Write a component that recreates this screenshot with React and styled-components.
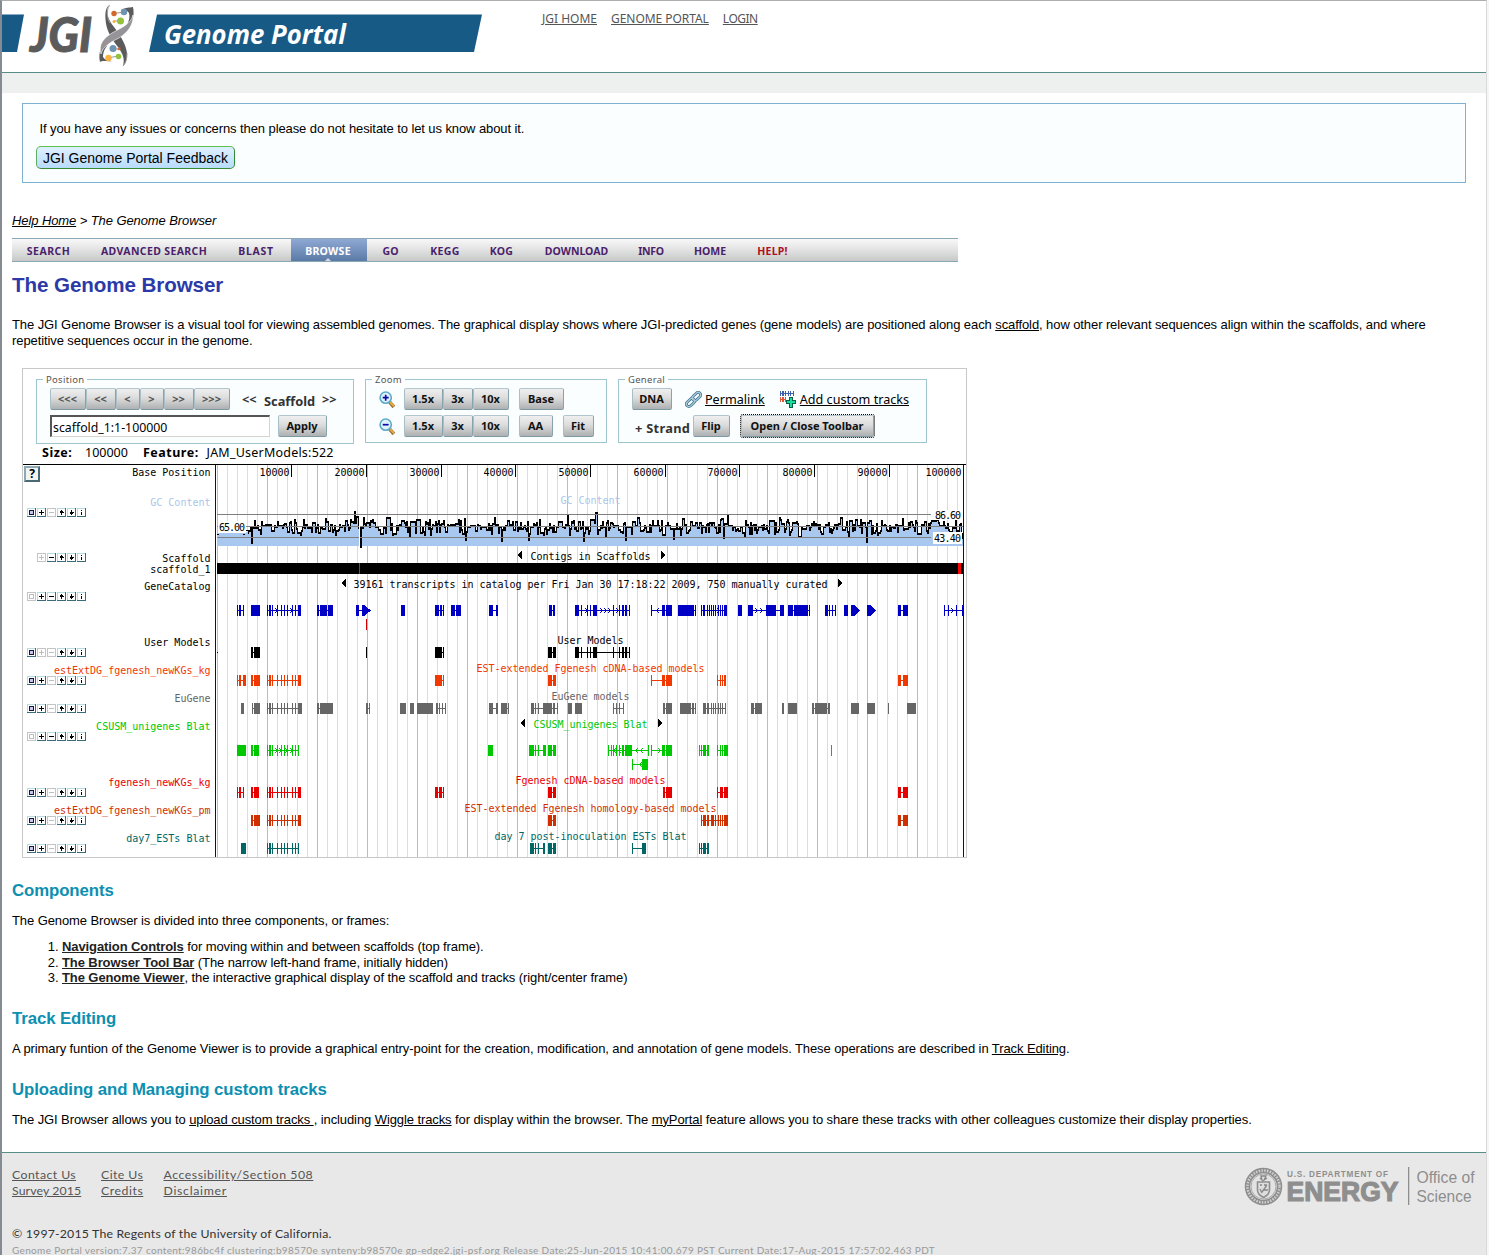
import React from "react";
import styled, { createGlobalStyle } from "styled-components";

const Global = createGlobalStyle`
  * { box-sizing: border-box; }
  html, body { margin: 0; background: #f6f6f6; }
  body { overflow: hidden; }
  a { color: inherit; text-decoration: underline; }
`;

const sans = `"Liberation Sans", Arial, sans-serif`;
const ui = `"Noto Sans", "DejaVu Sans", sans-serif`;
const mono = `"DejaVu Sans Mono", "Liberation Mono", monospace`;

const Page = styled.div`
  width: 1487px;
  height: 1255px;
  overflow: hidden;
  background: #fff;
  border-left: 2px solid #858b90;
  border-right: 1px solid #d9d9d9;
  border-top: 1px solid #adadad;
  font: 13px/16px ${sans};
  color: #000;
`;

const Header = styled.header`
  display: flex;
  height: 72px;
  border-bottom: 1px solid #568d86;
`;

const TopLinks = styled.nav`
  display: flex;
  gap: 14px;
  padding: 9px 0 0 58px;
  font: 12px/18px ${ui};
  color: #555;
`;

const TopLink = styled.a`
  letter-spacing: ${(p) => p.$ls || 0}px;
`;

const Band = styled.div`
  height: 20px;
  background: #eef0f0;
`;

const Content = styled.main`
  padding: 10px 10px 0;
  height: 1059px;
  letter-spacing: -0.092px;
`;

const Feedback = styled.section`
  width: 1444px;
  height: 80px;
  margin-left: 10px;
  padding: 17px 13px;
  border: 1px solid #7eb0cf;
  background: #fafeff;
`;

const FeedbackText = styled.div`
  padding-left: 3.5px;
`;

const FeedbackButton = styled.button`
  display: block;
  width: 199px;
  height: 23px;
  margin-top: 9px;
  padding: 0;
  border: 1px solid #4db848;
  border-color: #5cc04f #2f8a3a #3a8a35 #5cae60;
  border-radius: 5px;
  background: linear-gradient(#dff0ff, #b8dcfb);
  font: 14px/20px ${sans};
  white-space: nowrap;
`;

const Breadcrumb = styled.div`
  margin: 30px 0 9px;
  font-style: italic;
`;

const NavBar = styled.nav`
  display: flex;
  width: 946px;
  height: 24px;
  border: solid #8aa7b5;
  border-width: 1px 0;
  background: linear-gradient(#f8f8f8, #e2e2e2 50%, #c6c8c8);
`;

const NavItem = styled.div`
  position: relative;
  width: ${(p) => p.$w}px;
  padding-right: ${(p) => p.$shift || 0}px;
  text-align: center;
  font: bold 10.5px/24px ${ui};
  letter-spacing: ${(p) => p.$ls || 0}px;
  white-space: nowrap;
  color: ${(p) => (p.$active ? "#fff" : p.$help ? "#b01020" : "#4b1f6b")};
  background: ${(p) => (p.$active ? "linear-gradient(#8fa8d4, #5b7aa6)" : "none")};
  &::after {
    content: "";
    display: ${(p) => (p.$active ? "block" : "none")};
    position: absolute;
    left: 50%;
    bottom: 0;
    margin-left: -4px;
    border: solid transparent;
    border-width: 0 3px 3px;
    border-bottom-color: #d5d9de;
  }
`;

const Title = styled.h1`
  margin: 11px 0 20px;
  font: bold 20.6px/24px ${sans};
  color: #2b3aa8;
`;

const Heading = styled.h2`
  margin: 23px 0 12px;
  font: bold 16.8px/20px ${sans};
  color: #0c8fb0;
`;

const Text = styled.p`
  margin: 0;
  white-space: nowrap;
`;

const List = styled.ol`
  margin: 10px 0 0;
  padding-left: 50px;
  line-height: 15.6px;
  a { font-weight: bold; color: #222; }
`;

/* ---------- genome viewer ---------- */

const Viewer = styled.section`
  width: 945px;
  height: 490px;
  margin: 19px 0 0 10px;
  border: 1px solid #c8c8c8;
  letter-spacing: 0;
`;

const Toolbar = styled.div`
  display: flex;
  gap: 11px;
  height: 74px;
  padding: 10px 0 0 13px;
`;

const Group = styled.div`
  position: relative;
  display: flex;
  flex-direction: column;
  gap: 5px;
  width: ${(p) => p.$w}px;
  height: ${(p) => p.$h || 64}px;
  padding: 8px 0 0 13px;
  border: 1px solid #9fc6cf;
  background: #fafeff;
`;

const Legend = styled.span`
  position: absolute;
  top: -7px;
  left: 6px;
  padding: 0 3px;
  background: #fff;
  font: 9.5px/13px ${ui};
  letter-spacing: 0.3px;
  color: #555;
`;

const Row = styled.div`
  display: flex;
  align-items: center;
  height: 22px;
  gap: ${(p) => p.$gap || 0}px;
`;

const Cell = styled.div`
  display: flex;
  flex: none;
  width: ${(p) => (p.$w ? p.$w + "px" : "auto")};
`;

const Btn = styled.button`
  flex: none;
  width: ${(p) => p.$w}px;
  height: 22px;
  padding: 0 1px 1px 0;
  border: 1px solid #8fa7b0;
  border-color: #b3c6cd #86a3ae #7d99a4 #a9bfc8;
  border-radius: 2px;
  background: linear-gradient(#efefef, #dcdcdc 45%, #aeb0b1);
  font: bold 11px/19px ${ui};
  color: ${(p) => (p.$dim ? "#555" : "#111")};
  white-space: nowrap;
  outline: ${(p) => (p.$focus ? "1px dotted #000" : "none")};
`;

const Label = styled.span`
  flex: none;
  width: ${(p) => (p.$w ? p.$w + "px" : "auto")};
  padding-top: ${(p) => p.$drop || 0}px;
  font: bold 12.8px/18px ${ui};
  letter-spacing: ${(p) => p.$ls || 0}px;
  color: #333;
  white-space: nowrap;
`;

const Input = styled.div`
  width: 220px;
  height: 22px;
  padding-left: 1px;
  border: 1px solid #d8d4cc;
  border-top: 2px solid #555;
  border-left: 2px solid #555;
  background: #fff;
  font: 12.3px/21px ${ui};
`;

const ToolLink = styled.a`
  flex: none;
  padding-top: 2px;
  font: 12.6px/18px ${ui};
  white-space: nowrap;
`;

const Info = styled.div`
  display: flex;
  height: 15px;
  padding-left: 19px;
  margin-bottom: 6px;
  font: 12.5px/19px ${ui};
  b { letter-spacing: 0.5px; }
`;

const InfoPart = styled.span`
  width: ${(p) => (p.$w ? p.$w + "px" : "auto")};
  letter-spacing: ${(p) => p.$ls || 0}px;
  white-space: nowrap;
`;

const Board = styled.div`
  display: flex;
  height: 393px;
  border-top: 1px solid #000;
`;

const Side = styled.div`
  width: 192px;
  flex: none;
`;

const TrackRow = styled.div`
  display: flex;
  justify-content: space-between;
  height: ${(p) => p.$h}px;
  padding-right: 4.5px;
`;

const Controls = styled.div`
  display: flex;
  flex: none;
  width: 63px;
  margin-right: -40px;
  justify-content: flex-end;
  gap: 1px;
  padding-top: ${(p) => p.$top}px;
`;

const TrackName = styled.div`
  padding-top: 1px;
  font: 10px/${(p) => p.$lh || 14}px ${mono};
  text-align: right;
  white-space: pre;
  color: ${(p) => p.$c || "#000"};
`;

const HelpBtn = styled.div`
  width: 16px;
  height: 16px;
  margin: 1px 0 0 1px;
  border: 2px solid #5f7d88;
  border-color: #8ea9b2 #4a6a76 #4a6a76 #8ea9b2;
  background: #f2f4f4;
  font: bold 12px/12px ${ui};
  text-align: center;
`;

const ICON = {
  s: <path d="M2.5 2.5h4v4h-4z" />,
  p: <path d="M2 4.5h5M4.5 2v5" />,
  m: <path d="M2 4.5h5" />,
  u: <path d="M4.5 2v5M2.5 4.5h1v-1h2v1h1" />,
  d: <path d="M4.5 2v5M2.5 4.5h1v1h2v-1h1" />,
  i: <path d="M4.5 4v3M4.5 2v1" />,
};

const Glyph = ({ kind, off }) => (
  <svg width="9" height="9" viewBox="0 0 9 9" fill={kind === "s" && !off ? "#c6c6f4" : "none"} shapeRendering="crispEdges">
    <rect width="9" height="9" fill={off ? "#c4c4c4" : "#b5dce0"} />
    <path d="M8 0h1v9H0V8h8z" fill={off ? "#c4c4c4" : "#3b6c7b"} />
    <rect x="1" y="1" width="7" height="7" fill="#fff" />
    <g stroke={off ? "#bdbdbd" : kind === "s" ? "#15153a" : "#000"}>{ICON[kind]}</g>
  </svg>
);

// Upper case marks an enabled control, lower case a disabled one.
const ControlSet = ({ keys, top = 13 }) => (
  <Controls $top={top}>
    {keys.split("").map((k) => (
      <Glyph key={k} kind={k.toLowerCase()} off={k === k.toLowerCase()} />
    ))}
  </Controls>
);

const TRACKS = [
  { h: 57, keys: "SPmUDI", name: "GC Content", c: "#a8c6ea" },
  { h: 27, keys: "pMUDI", name: "Scaffold\nscaffold_1", top: 1, lh: 11 },
  { h: 56, keys: "sPMUDI", name: "GeneCatalog" },
  { h: 28, keys: "SpmUDI", name: "User Models" },
  { h: 28, keys: "SPmUDI", name: "estExtDG_fgenesh_newKGs_kg", c: "#f03800" },
  { h: 28, keys: "SPmUDI", name: "EuGene", c: "#666" },
  { h: 56, keys: "sPMUDI", name: "CSUSM_unigenes Blat", c: "#00c800" },
  { h: 28, keys: "SPmUDI", name: "fgenesh_newKGs_kg", c: "#e80000" },
  { h: 28, keys: "SPmUDI", name: "estExtDG_fgenesh_newKGs_pm", c: "#d03000" },
  { h: 26, keys: "SPmUDI", name: "day7_ESTs Blat", c: "#006666" },
];

// A gene is a list of exons [x, width]; a connector spans from first to last.
const long = [[267, 1], [269, 2], [272, 1], [277, 1], [281, 1], [284, 1], [287, 1], [292, 1], [295, 1]];
const longA = [...long, [298, 3]];
const longB = [...long, [298, 1]];
const g251 = [[251, 2], [254, 6]];
const g548 = [[548, 4], [553, 3]];
const g575 = [[575, 4], [581, 1], [587, 1], [590, 1], [593, 4], [613, 1], [619, 1], [622, 2], [625, 2], [629, 1]];
const g651 = [[651, 1], [662, 3], [666, 6]];
const g898 = [[898, 3], [903, 5]];

const LANES = [
  {
    y: 605, c: "#0000c4",
    genes: [
      [[237, 1], [239, 2], [243, 1]], [[251, 2], [253, 7]], longA, [[317, 2], [320, 7], [328, 5]],
      [[356, 3], [362, 1]], [[401, 4]], [[435, 4], [440, 2], [443, 1]], [[451, 4], [456, 5]],
      [[489, 4], [496, 2]], [[549, 3], [553, 2]], g575, g651, [[678, 16], [695, 1]],
      [[701, 1], [703, 2], [707, 1], [709, 1], [711, 1], [713, 1], [715, 1], [718, 1], [720, 1], [722, 1], [724, 3]],
      [[738, 4]], [[748, 5], [766, 10], [780, 4]], [[788, 5], [794, 14], [809, 1]],
      [[825, 3], [829, 1], [832, 1], [835, 1]], [[844, 4]], [[898, 3], [903, 5]],
      [[944, 1], [948, 1], [956, 1], [962, 1]],
    ],
    arrows: [[363, 0, 7], [851, 3, 5], [867, 3, 5]],
    marks: [275, 290, 585, 600, 604, 608, 616, -658, 755, 760, 717, 951],
  },
  { y: 619, c: "#d00000", genes: [[[366, 1]]] },
  { y: 647, c: "#000", genes: [g251, [[366, 1]], [[435, 7], [443, 1]], g548, g575] },
  {
    y: 675, c: "#f03800",
    genes: [[[237, 1], [239, 2], [243, 3]], g251, longA, [[435, 7], [443, 1]], g548, g651, [[717, 1], [720, 1], [722, 1], [724, 2]], g898],
  },
  {
    y: 703, c: "#666",
    genes: [
      [[241, 3]], [[252, 1], [254, 6]], [...long, [298, 4]], [[317, 2], [320, 13]], [[366, 2], [369, 1]], [[400, 6]],
      [[410, 4]], [[417, 16]], [[436, 2], [439, 1], [442, 1], [445, 1]], [[489, 4], [496, 2]], [[501, 6], [508, 1]],
      [[531, 3], [535, 1], [538, 1], [543, 9], [553, 2], [557, 1]], [[568, 4]], [[575, 7]],
      [[613, 1], [616, 1], [619, 1], [623, 1]], [[663, 2], [666, 6]], [[680, 11], [692, 2], [695, 1]],
      [[703, 3], [707, 2], [711, 1], [713, 1], [715, 1], [718, 1], [720, 1], [722, 1], [725, 1]], [[751, 3], [755, 7]], [[782, 2]], [[788, 9]],
      [[812, 2], [815, 12], [828, 2]], [[851, 8]], [[867, 8]], [[888, 1]], [[907, 9]],
    ],
  },
  {
    y: 745, c: "#00c800",
    genes: [
      [[237, 9]], [[251, 2], [254, 5]], longB, [[488, 5]], [[529, 5], [535, 1], [538, 1], [543, 3]], g548,
      [[608, 1], [611, 1], [613, 1], [616, 1], [619, 1], [622, 2], [625, 7], [648, 1]], g651,
      [[699, 1], [701, 1], [703, 3], [707, 2]], [[717, 1], [720, 1], [722, 1], [724, 4]], [[831, 1]],
    ],
    marks: [275, 279, 285, 290, -615, -620, -637, -642, 658],
  },
  { y: 759, c: "#00c800", genes: [[[632, 1], [642, 6]]], marks: [-641] },
  {
    y: 787, c: "#e80000",
    genes: [[[237, 1], [239, 2], [243, 1]], [[251, 2], [254, 5]], longA, [[435, 3], [439, 3], [443, 1]], g548, [[663, 2], [666, 6]], [[717, 1], [720, 3], [724, 4]], g898],
  },
  {
    y: 815, c: "#d03000",
    genes: [g251, longA, g548, [[701, 1], [703, 3], [707, 2], [711, 3], [715, 1], [718, 1], [720, 1], [722, 1], [724, 4]], g898],
  },
  {
    y: 843, c: "#006666",
    genes: [[[241, 5]], longB, [[530, 4], [535, 1], [538, 1], [543, 2]], g548, [[632, 1], [642, 4]], [[699, 1], [701, 1], [703, 3], [707, 2]]],
  },
];

const CAPTIONS = [
  [560.5, 504, "GC Content", "#a8c6ea"],
  [530.5, 560, "Contigs in Scaffolds", "#000", 517, 661],
  [353.5, 588, "39161 transcripts in catalog per Fri Jan 30 17:18:22 2009, 750 manually curated", "#000", 341, 838],
  [557.5, 644, "User Models", "#000"],
  [476.5, 672, "EST-extended Fgenesh cDNA-based models", "#f03800"],
  [551.5, 700, "EuGene models", "#666"],
  [533.5, 728, "CSUSM_unigenes Blat", "#00c800", 520, 658],
  [515.5, 784, "Fgenesh cDNA-based models", "#e80000"],
  [464.5, 812, "EST-extended Fgenesh homology-based models", "#d03000"],
  [494.5, 840, "day 7 post-inoculation ESTs Blat", "#006666"],
];

const TICKS = [291, 366, 441, 515, 590, 665, 739, 814, 889, 963];

const SPIKES = {
  251: 542, 354: 511, 360: 546, 465: 539, 501: 540, 528: 539, 567: 515, 583: 540, 595: 512, 596: 512,
  625: 539, 673: 538, 723: 537, 727: 515, 744: 536, 866: 541, 605: 536, 409: 535, 961: 537,
};

const gcSeries = () => {
  let seed = 90217;
  const rnd = () => (seed = (seed * 16807) % 2147483647) / 2147483647;
  const out = [];
  let v = 525;
  for (let x = 248; x < 963; x++) {
    if (rnd() > 0.3) {
      const bump = x > 345 && x < 375 ? -4 : 0;
      v = Math.round(526 + bump + (rnd() + rnd() - 1) * 10);
    }
    out.push([x, SPIKES[x] || v]);
  }
  return out;
};
const GC = gcSeries();
// The trace is two pixels tall on its flats and one pixel wide on its steps.
const gcBars = GC.map(([x, y], i) => {
  const prev = i ? GC[i - 1][1] : y;
  const top = Math.min(y, prev);
  return `M${x} ${top}h1v${Math.max(y, prev) - top + 2}h-1z`;
}).join("");
const gcArea = "M217 532H248" + GC.map(([x, y]) => `V${y}H${x + 1}`).join("") + "V546H217Z";

const ChartText = styled.text`
  font: 10px ${mono};
  white-space: pre;
`;

const Gene = ({ exons, y }) => {
  const first = exons[0];
  const last = exons[exons.length - 1];
  return (
    <>
      <rect x={first[0]} y={y + 5} width={last[0] + last[1] - first[0]} height="1" />
      {exons.map(([x, w]) => <rect key={x} x={x} y={y} width={w} height="11" />)}
    </>
  );
};

const Chart = () => (
  <svg width="751" height="392" viewBox="215 465 751 392" shapeRendering="crispEdges">
    {Array.from({ length: 75 }, (_, i) => {
      const x = 217 + i * 10;
      return <rect key={x} x={x} y="465" width="1" height="392" fill={i % 5 ? "#dcd8f4" : "#bcbcbc"} />;
    })}
    <rect x="215" y="465" width="1" height="392" fill="#0000b0" />
    {TICKS.map((x, i) => (
      <g key={x}>
        <rect x={x} y="465" width="1" height="12" />
        <ChartText x={x - 1.5} y="476" textAnchor="end">{(i + 1) * 10000}</ChartText>
      </g>
    ))}
    <path d={gcArea} fill="#a8c8ef" />
    <path d={gcBars} />
    <path d="M217 514.5H931M217 526.5H963M217 537.5H931" stroke="#808080" />
    <path d="M217 534h2M243 534h2M245 530h3v4" stroke="#000" fill="none" />
    <rect x="359" y="519" width="1" height="27" fill="#fff" />
    <rect x="218" y="521" width="28" height="12" fill="#fff" />
    <rect x="932" y="510" width="30" height="10" fill="#fff" />
    <rect x="933" y="532" width="29" height="12" fill="#fff" />
    <ChartText x="219" y="531" textLength="26">65.00</ChartText>
    <ChartText x="935" y="519" textLength="26">86.60</ChartText>
    <ChartText x="934" y="542" textLength="27">43.40</ChartText>
    <rect x="217" y="563" width="746" height="11" />
    <rect x="359" y="563" width="1" height="11" fill="#d02020" />
    <rect x="958" y="563" width="3" height="11" fill="#f00" />
    <rect x="963" y="465" width="1" height="392" fill="#0000b0" />
    <rect x="217" y="652" width="1" height="1" />
    {LANES.map((lane) => (
      <g key={lane.y} fill={lane.c}>
        {lane.genes.map((g) => <Gene key={g[0][0]} exons={g} y={lane.y} />)}
        {(lane.arrows || []).map(([x, body, tip]) => (
          <path key={x} d={`M${x} ${lane.y}h${body + 1}l${tip} 5.5l-${tip} 5.5h-${body + 1}z`} />
        ))}
        {(lane.marks || []).map((m) => {
          const dir = m > 0 ? 1 : -1;
          const x = Math.abs(m);
          return (
            <g key={m}>
              <rect x={x} y={lane.y + 3} width="1" height="1" />
              <rect x={x + dir} y={lane.y + 4} width="1" height="1" />
              <rect x={x + dir} y={lane.y + 6} width="1" height="1" />
              <rect x={x} y={lane.y + 7} width="1" height="1" />
            </g>
          );
        })}
      </g>
    ))}
    {CAPTIONS.map(([x, y, label, c, left, right]) => (
      <g key={y}>
        <ChartText x={x} y={y} fill={c} textLength={label.length * 6}>{label}</ChartText>
        {left && <path d={`M${left} ${y - 5}l5 -4v8z`} />}
        {right && <path d={`M${right + 5} ${y - 5}l-5 -4v8z`} />}
      </g>
    ))}
  </svg>
);

/* ---------- drawings ---------- */

const bannerFont = { fontFamily: `"Open Sans", "Noto Sans", sans-serif`, fontStyle: "italic", fontWeight: 700 };
const markFont = { fontFamily: `Lato, "Open Sans", sans-serif`, fontStyle: "italic", fontWeight: 900 };

const Logo = () => (
  <svg width="482" height="71" viewBox="2 1 482 71">
    <path d="M2 14.5H24L17 52H2zM157 14.5H482L474 52H149z" fill="#175a86" />
    <text x="30" y="52" fontSize="47" textLength="62" lengthAdjust="spacingAndGlyphs" fill="#5b5b5b" stroke="#5b5b5b" strokeWidth="1" {...markFont}>JGI</text>
    <text x="164" y="43.5" fontSize="26" textLength="182" lengthAdjust="spacingAndGlyphs" fill="#fff" {...bannerFont}>Genome Portal</text>
    <g fill="none" stroke="#999" strokeWidth="1">
      <path d="M114 13.500L124 12M114 21H121M113 49H119M108 58L118 56" />
    </g>
    <path d="M109.500 5C104.500 10 108 20 114 27C120 35 126 44 127 53C127 59 126 63 123 66C125 59 123 54 118 47C111 38 106 30 105.500 19C105 12 106 7 109.500 5z" fill="#5b5b5b" />
    <path d="M133 7C135 16 132 24 126 31L120 35C126 27 131 20 129 13C127 10 124 10 121 10C126 7 129 8 133 7z" fill="#5b5b5b" />
    <path d="M100 62C98 53 101 46 107 41L113 39C107 45 103 50 103 57C105 60 108 61 112 61C107 62 103 60 100 62z" fill="#5b5b5b" />
    <path d="M133 15C134 25 127 33 119 38C111 42 103 46 101 54C98 44 104 38 112 33C121 28 131 24 133 15z" fill="#969498" stroke="#fff" strokeWidth=".6" />
    <path d="M109.500 5C106 11 107 18 110 23M127 53C127 59 126 63 123 66" stroke="#999" fill="none" />
    <circle cx="114" cy="13.500" r="2.700" fill="#d4682c" />
    <circle cx="124" cy="12" r="3.200" fill="#6e93b3" />
    <circle cx="120.500" cy="21" r="3.500" fill="#95c13d" />
    <circle cx="114" cy="21.500" r="1.500" fill="#fbb040" />
    <circle cx="113" cy="48.500" r="3.500" fill="#6e93b3" />
    <circle cx="119" cy="48.700" r="1.500" fill="#d4682c" />
    <circle cx="108.500" cy="58" r="3.200" fill="#fbb040" />
    <circle cx="118.500" cy="56.500" r="2.800" fill="#95c13d" />
  </svg>
);

const Magnifier = ({ minus }) => (
  <svg width="17" height="17" viewBox="0 0 16 16">
    <path d="M10 10.500L14 15" stroke="#8a6a3a" strokeWidth="3.400" />
    <path d="M10.300 10.300L14 14.300" stroke="#eda83a" strokeWidth="2" />
    <circle cx="6.300" cy="6.300" r="5.300" fill="#dff1fa" stroke="#5ba9c9" strokeWidth="1.500" />
    <path d={minus ? "M3.500 6.300h5.600" : "M3.500 6.300h5.600M6.300 3.500v5.600"} stroke="#0a0aa8" strokeWidth="1.600" />
  </svg>
);

const ChainIcon = () => (
  <svg width="17" height="17" viewBox="0 0 17 17" fill="none">
    <g transform="rotate(-45 8.500 8.500)">
      <rect x="-0.500" y="6" width="9.500" height="5" rx="2.500" stroke="#3f7391" strokeWidth="2.800" />
      <rect x="8" y="6" width="9.500" height="5" rx="2.500" stroke="#3f7391" strokeWidth="2.800" />
      <rect x="-0.500" y="6" width="9.500" height="5" rx="2.500" stroke="#a9cbdc" strokeWidth="1.300" />
      <rect x="8" y="6" width="9.500" height="5" rx="2.500" stroke="#a9cbdc" strokeWidth="1.300" />
    </g>
  </svg>
);

const TracksIcon = () => (
  <svg width="17" height="17" viewBox="0 0 17 17" shapeRendering="crispEdges">
    <path d="M0 0h1v5H0zM2 0h2v5H2zM5 0h1v5H5zM8 0h1v5H8zM10 0h1v5h-1zM13 0h1v5h-1zM0 2h14v1H0z" fill="#3d5fae" />
    <path d="M0 6h1v5H0zM2 6h2v5H2zM5 6h1v5H5zM0 8h6v1H0z" fill="#e0553a" />
    <path d="M9 6h4v3h3v4h-3v4H9v-4H6V9h3z" fill="#0a5c46" />
    <path d="M10 7h2v3h3v2h-3v4h-2v-4H7v-2h3z" fill="#19dd9c" />
  </svg>
);

const EnergyLogo = () => (
  <svg width="234" height="42" viewBox="1242 1167 234 42" fontFamily="Liberation Sans, Arial, sans-serif" fill="#8e8e8e">
    <circle cx="1263.500" cy="1186.500" r="16" fill="none" stroke="#8e8e8e" strokeWidth="5.500" />
    <circle cx="1263.500" cy="1186.500" r="16" fill="none" stroke="#cfcfcf" strokeWidth="2.600" strokeDasharray="1.500 1.300" />
    <circle cx="1263.500" cy="1186.500" r="12.500" fill="#e2e2e2" stroke="#999" strokeWidth=".8" />
    <path d="M1257.500 1182h12v8c0 4-3 6-6 7.500c-3-1.500-6-3.500-6-7.500z" fill="#ddd" stroke="#8e8e8e" strokeWidth="1.600" />
    <path d="M1260 1178l2 2-1-4h5l-2 4 3-2M1260 1185h2M1264 1185h3M1260 1189l2 4M1267 1185l-5 7M1264 1190h4" fill="none" stroke="#888" strokeWidth="1.300" />
    <text x="1287" y="1176.500" fontSize="8.200" fontWeight="700" textLength="101">U.S. DEPARTMENT OF</text>
    <text x="1286.500" y="1201.300" fontSize="28" fontWeight="700" stroke="#8e8e8e" strokeWidth="1.200" textLength="112" lengthAdjust="spacingAndGlyphs">ENERGY</text>
    <rect x="1408" y="1167" width="1.300" height="38" />
    <text x="1416.500" y="1182.500" fontSize="16" textLength="58" lengthAdjust="spacingAndGlyphs">Office of</text>
    <text x="1416.500" y="1201.500" fontSize="16" textLength="55" lengthAdjust="spacingAndGlyphs">Science</text>
  </svg>
);

/* ---------- footer ---------- */

const Footer = styled.footer`
  height: 103px;
  border-top: 1px solid #568d86;
  background: #e8e8e8;
  padding: 14px 10px 0;
  font: 12.3px/16px Lato, ${ui};
  color: #555;
`;

const FooterTop = styled.div`
  display: flex;
  justify-content: space-between;
  height: 59px;
`;

const FooterCols = styled.div`
  display: grid;
  grid-template-columns: 89px 62.5px 160px;
  align-content: start;
  white-space: nowrap;
`;

const FLink = styled.a`
  justify-self: start;
  letter-spacing: ${(p) => (p.$ls === undefined ? 0.42 : p.$ls)}px;
`;

const Copy = styled.div`
  color: #333;
  letter-spacing: 0.19px;
`;

const Version = styled.div`
  font-size: 10px;
  color: #999;
  white-space: nowrap;
  letter-spacing: 0.335px;
`;

const NAV = [
  ["SEARCH", 73, 0.45], ["ADVANCED SEARCH", 139, 0.36, 1], ["BLAST", 67, 0.7, 3], ["BROWSE", 76, 0.3, 2], ["GO", 47, 0], ["KEGG", 62, 0.4],
  ["KOG", 51, 0.2], ["DOWNLOAD", 99, 0], ["INFO", 50, -0.3], ["HOME", 68, 0], ["HELP!", 57, 0.2],
];

export default function App() {
  return (
    <>
      <Global />
      <Page>
        <Header>
          <Logo />
          <TopLinks>
            <TopLink href="#">JGI HOME</TopLink>
            <TopLink href="#" $ls={-0.05}>GENOME PORTAL</TopLink>
            <TopLink href="#" $ls={-0.5}>LOGIN</TopLink>
          </TopLinks>
        </Header>
        <Band />
        <Content>
          <Feedback>
            <FeedbackText>If you have any issues or concerns then please do not hesitate to let us know about it.</FeedbackText>
            <FeedbackButton>JGI Genome Portal Feedback</FeedbackButton>
          </Feedback>
          <Breadcrumb><a href="#">Help Home</a> &gt; The Genome Browser</Breadcrumb>
          <NavBar>
            {NAV.map(([label, w, ls, shift]) => (
              <NavItem key={label} $w={w} $ls={ls} $shift={shift} $active={label === "BROWSE"} $help={label === "HELP!"}>{label}</NavItem>
            ))}
          </NavBar>
          <Title>The Genome Browser</Title>
          <Text>
            The JGI Genome Browser is a visual tool for viewing assembled genomes. The graphical display shows where JGI-predicted genes (gene models) are positioned along each <a href="#">scaffold</a>, how other relevant sequences align within the scaffolds, and where<br />
            repetitive sequences occur in the genome.
          </Text>
          <Viewer>
            <Toolbar>
              <Group $w={318} $h={65}>
                <Legend>Position</Legend>
                <Row>
                  <Btn $w={36} $dim>&lt;&lt;&lt;</Btn>
                  <Btn $w={30} $dim>&lt;&lt;</Btn>
                  <Btn $w={24} $dim>&lt;</Btn>
                  <Btn $w={24} $dim>&gt;</Btn>
                  <Btn $w={30} $dim>&gt;&gt;</Btn>
                  <Btn $w={36} $dim>&gt;&gt;&gt;</Btn>
                  <Cell $w={12} />
                  <Label $w={22}>&lt;&lt;</Label>
                  <Label $w={58} $drop={4}>Scaffold</Label>
                  <Label>&gt;&gt;</Label>
                </Row>
                <Row $gap={8}>
                  <Input>scaffold_1:1-100000</Input>
                  <Btn $w={49}>Apply</Btn>
                </Row>
              </Group>
              <Group $w={242}>
                <Legend>Zoom</Legend>
                <Row>
                  <Cell $w={25}><Magnifier /></Cell>
                  <Btn $w={39}>1.5x</Btn>
                  <Btn $w={30}>3x</Btn>
                  <Btn $w={36}>10x</Btn>
                  <Cell $w={10} />
                  <Btn $w={45}>Base</Btn>
                </Row>
                <Row>
                  <Cell $w={25}><Magnifier minus /></Cell>
                  <Btn $w={39}>1.5x</Btn>
                  <Btn $w={30}>3x</Btn>
                  <Btn $w={36}>10x</Btn>
                  <Cell $w={10} />
                  <Btn $w={34}>AA</Btn>
                  <Cell $w={10} />
                  <Btn $w={31}>Fit</Btn>
                </Row>
              </Group>
              <Group $w={309}>
                <Legend>General</Legend>
                <Row>
                  <Btn $w={40}>DNA</Btn>
                  <Cell $w={13} />
                  <Cell $w={20}><ChainIcon /></Cell>
                  <ToolLink href="#">Permalink</ToolLink>
                  <Cell $w={15} />
                  <Cell $w={20}><TracksIcon /></Cell>
                  <ToolLink href="#">Add custom tracks</ToolLink>
                </Row>
                <Row>
                  <Cell $w={3} />
                  <Label $w={58} $drop={4} $ls={0.3}>+ Strand</Label>
                  <Btn $w={37}>Flip</Btn>
                  <Cell $w={11} />
                  <Btn $w={133} $focus>Open / Close Toolbar</Btn>
                </Row>
              </Group>
            </Toolbar>
            <Info>
              <InfoPart $w={43}><b>Size:</b></InfoPart>
              <InfoPart $w={58}>100000</InfoPart>
              <InfoPart $w={63.5}><b>Feature:</b></InfoPart>
              <InfoPart $ls={0.22}>JAM_UserModels:522</InfoPart>
            </Info>
            <Board>
              <Side>
                <TrackRow $h={30}>
                  <HelpBtn>?</HelpBtn>
                  <TrackName>Base Position</TrackName>
                </TrackRow>
                {TRACKS.map((t) => (
                  <TrackRow key={t.name} $h={t.h}>
                    <ControlSet keys={t.keys} top={t.top} />
                    <TrackName $c={t.c} $lh={t.lh}>{t.name}</TrackName>
                  </TrackRow>
                ))}
              </Side>
              <Chart />
            </Board>
          </Viewer>
          <Heading>Components</Heading>
          <Text>The Genome Browser is divided into three components, or frames:</Text>
          <List>
            <li><a href="#">Navigation Controls</a> for moving within and between scaffolds (top frame).</li>
            <li><a href="#">The Browser Tool Bar</a> (The narrow left-hand frame, initially hidden)</li>
            <li><a href="#">The Genome Viewer</a>, the interactive graphical display of the scaffold and tracks (right/center frame)</li>
          </List>
          <Heading>Track Editing</Heading>
          <Text>
            A primary funtion of the Genome Viewer is to provide a graphical entry-point for the creation, modification, and annotation of gene models. These operations are described in <a href="#">Track Editing</a>.
          </Text>
          <Heading>Uploading and Managing custom tracks</Heading>
          <Text>
            The JGI Browser allows you to <a href="#">upload custom tracks&nbsp;</a>, including <a href="#">Wiggle tracks</a> for display within the browser. The <a href="#">myPortal</a> feature allows you to share these tracks with other colleagues customize their display properties.
          </Text>
        </Content>
        <Footer>
          <FooterTop>
            <FooterCols>
              <FLink href="#">Contact Us</FLink>
              <FLink href="#">Cite Us</FLink>
              <FLink href="#" $ls={0.55}>Accessibility/Section 508</FLink>
              <FLink href="#" $ls={0.1}>Survey 2015</FLink>
              <FLink href="#" $ls={0.55}>Credits</FLink>
              <FLink href="#" $ls={0.7}>Disclaimer</FLink>
            </FooterCols>
            <EnergyLogo />
          </FooterTop>
          <Copy>© 1997-2015 The Regents of the University of California.</Copy>
          <Version>
            Genome Portal version:7.37 content:986bc4f clustering:b98570e synteny:b98570e gp-edge2.jgi-psf.org Release Date:25-Jun-2015 10:41:00.679 PST Current Date:17-Aug-2015 17:57:02.463 PDT
          </Version>
        </Footer>
      </Page>
    </>
  );
}
